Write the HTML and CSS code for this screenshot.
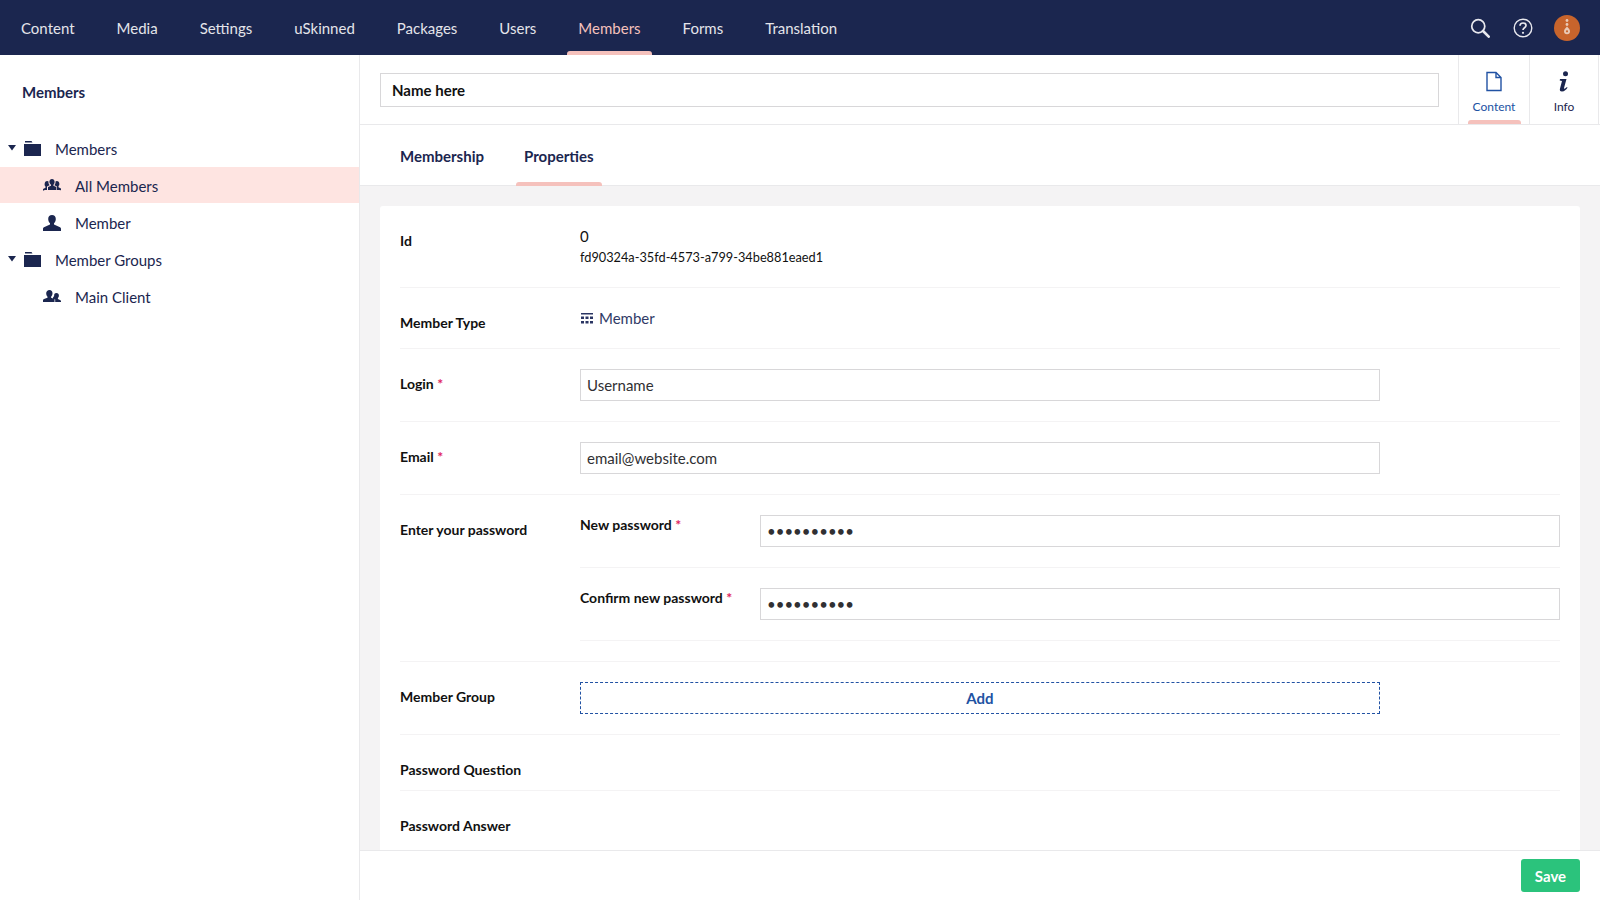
FILE: index.html
```html
<!DOCTYPE html>
<html lang="en">
<head>
  <meta charset="UTF-8">
  <title>Members</title>
  <link rel="stylesheet" href="styles.css">
</head>
<body>
  <header class="topbar">
    <nav class="sections">
      <a class="section">Content</a>
      <a class="section">Media</a>
      <a class="section">Settings</a>
      <a class="section">uSkinned</a>
      <a class="section">Packages</a>
      <a class="section">Users</a>
      <a class="section active">Members</a>
      <a class="section">Forms</a>
      <a class="section">Translation</a>
    </nav>
    <div class="tools">
      <svg class="tool-search" width="20" height="20" viewBox="0 0 23 23">
        <circle cx="9.5" cy="9.5" r="7.5" fill="none" stroke="#e8e8ee" stroke-width="2"/>
        <path d="M15 15l6.500 6.500" stroke="#e8e8ee" stroke-width="3" stroke-linecap="round"/>
      </svg>
      <svg class="tool-help" width="20" height="20" viewBox="0 0 20 20">
        <circle cx="10" cy="10" r="8.800" fill="none" stroke="#e8e8ee" stroke-width="1.400"/>
        <path d="M7 7.800c0-1.800 1.400-2.800 3-2.800s3 1 3 2.600c0 2.200-3 2.200-3 4.400" fill="none" stroke="#e8e8ee" stroke-width="1.700"/>
        <circle cx="10" cy="14.800" r="1.100" fill="#e8e8ee"/>
      </svg>
      <svg class="tool-avatar" width="26" height="26" viewBox="0 0 26 26">
        <circle cx="13" cy="13" r="13" fill="#c8642c"/>
        <circle cx="13" cy="5.500" r="1.400" fill="#e9c9b6"/>
        <circle cx="13" cy="9.500" r="1.400" fill="#e9c9b6"/>
        <path d="M13 11.500c2 2 3 3.400 3 4.800a3 3 0 0 1-6 0c0-1.400 1-2.800 3-4.800z" fill="#e9c9b6"/>
        <circle cx="13" cy="16.300" r="1.100" fill="#c8642c"/>
      </svg>
    </div>
  </header>

  <div class="layout">
    <aside class="sidebar">
      <h3 class="tree-title">Members</h3>
      <ul class="tree">
        <li class="tree-row root">
          <svg class="caret" width="8" height="6" viewBox="0 0 8 6"><path d="M0 0h8L4 5.500z" fill="#1b264f"/></svg>
          <svg class="tree-icon" width="17" height="15" viewBox="0 0 17 15"><path d="M1 0h6.500l1 1.500H1zM0 3h17v12H0z" fill="#1b264f"/></svg>
          <span>Members</span>
        </li>
        <li class="tree-row leaf selected">
          <svg class="tree-icon" width="18" height="13" viewBox="0 0 18 13"><path d="M9 0c1.500 0 2.600 1.100 2.600 2.800 0 1.300-.5 2.300-1.200 2.900v1l3 1.400V11H5V8.100l3-1.400v-1C7.300 5.100 6.400 4.100 6.400 2.800 6.400 1.100 7.500 0 9 0zM4.200 2c.6 0 1 .2 1.300.5-.2 1.400.2 2.700 1 3.600v.2L4 7.500V11H1.800l-1.800.7v-1.600l2.500-1.300v-1.300c-.6-.5-.9-1.200-.9-2.100C1.600 3.100 2.700 2 4.200 2zM13.800 2c1.500 0 2.600 1.100 2.600 2.900 0 .9-.3 1.600-.9 2.100v1.300l2.500 1.300v1.600L16.200 11H14V7.500l-2.500-1.200v-.2c.8-.9 1.200-2.200 1-3.600.3-.3.700-.5 1.300-.5z" fill="#1b264f"/></svg>
          <span>All Members</span>
        </li>
        <li class="tree-row leaf">
          <svg class="tree-icon" width="18" height="16" viewBox="0 0 18 16"><path d="M9 0c2.300 0 3.800 1.600 3.800 4 0 1.900-.8 3.500-1.800 4.300v1.200l5.500 2.500c.9.400 1.500 1 1.500 1.800V16H0v-2.200c0-.8.600-1.400 1.500-1.800L7 9.500V8.300C6 7.500 5.200 5.900 5.200 4 5.200 1.600 6.700 0 9 0z" fill="#1b264f"/></svg>
          <span>Member</span>
        </li>
        <li class="tree-row root">
          <svg class="caret" width="8" height="6" viewBox="0 0 8 6"><path d="M0 0h8L4 5.500z" fill="#1b264f"/></svg>
          <svg class="tree-icon" width="17" height="15" viewBox="0 0 17 15"><path d="M1 0h6.500l1 1.500H1zM0 3h17v12H0z" fill="#1b264f"/></svg>
          <span>Member Groups</span>
        </li>
        <li class="tree-row leaf">
          <svg class="tree-icon" width="18" height="13" viewBox="0 0 18 13"><path d="M6.500 0c1.900 0 3 1.300 3 3.300 0 1.500-.6 2.700-1.400 3.400v1l3.400 1.300V12H0v-1.700c0-.6.400-1.100 1-1.400l3.500-1.200v-1C3.700 6 3.200 4.800 3.200 3.300 3.200 1.300 4.600 0 6.500 0zM13.500 3c1.500 0 2.400 1 2.400 2.600 0 1.100-.4 2-1 2.500v.8l2.100 1c.6.300 1 .7 1 1.200V12h-5.800V9.500L10 8.500v-.9c1-1 1.300-2.100 1.300-3.500.5-.7 1.300-1.100 2.200-1.100z" fill="#1b264f"/></svg>
          <span>Main Client</span>
        </li>
      </ul>
    </aside>

    <main class="editor">
      <div class="editor-head">
        <input class="name-input" type="text" value="Name here">
        <div class="apps">
          <div class="app active">
            <svg width="16" height="20" viewBox="0 0 16 20"><path d="M1 1h9l5 5v13H1z M10 1v5h5" fill="none" stroke="#2152a3" stroke-width="1.400"/></svg>
            <span>Content</span>
          </div>
          <div class="app">
            <svg width="12" height="21" viewBox="0 0 12 21"><circle cx="7.500" cy="2.700" r="2.500" fill="#1b264f"/><path d="M2 8h6.500L6 17c-.2.800.5 1 1 .6l2-1.500.5.700C8 18.800 6.500 20.500 4 20.500c-2 0-2.500-1.200-2-3l2-7.500-2.300-.4z" fill="#1b264f"/></svg>
            <span>Info</span>
          </div>
        </div>
      </div>

      <div class="tabs">
        <a class="tab">Membership</a>
        <a class="tab active">Properties</a>
      </div>

      <div class="scroll">
        <section class="card">
          <div class="prop">
            <div class="prop-label">Id</div>
            <div class="prop-value">
              <div class="id-num">0</div>
              <div class="id-guid">fd90324a-35fd-4573-a799-34be881eaed1</div>
            </div>
          </div>

          <div class="prop">
            <div class="prop-label">Member Type</div>
            <div class="prop-value type-value">
              <svg width="12" height="11" viewBox="0 0 12 11"><path d="M0 0h12v1.500H0zM0 3.500h3v2.500H0zM4.500 3.500h3v2.500h-3zM9 3.500h3v2.500H9zM0 8h3v2.500H0zM4.500 8h3v2.500h-3zM9 8h3v2.500H9z" fill="#2a3563"/></svg>
              <span>Member</span>
            </div>
          </div>

          <div class="prop">
            <div class="prop-label">Login <i class="req">*</i></div>
            <div class="prop-value"><input class="field" type="text" value="Username"></div>
          </div>

          <div class="prop">
            <div class="prop-label">Email <i class="req">*</i></div>
            <div class="prop-value"><input class="field" type="text" value="email@website.com"></div>
          </div>

          <div class="prop">
            <div class="prop-label">Enter your password</div>
            <div class="prop-value">
              <div class="sub-prop">
                <div class="sub-label">New password <i class="req">*</i></div>
                <input class="field pass" type="password" value="1234567890">
              </div>
              <div class="sub-prop">
                <div class="sub-label">Confirm new password <i class="req">*</i></div>
                <input class="field pass" type="password" value="1234567890">
              </div>
            </div>
          </div>

          <div class="prop">
            <div class="prop-label">Member Group</div>
            <div class="prop-value"><button class="add-btn">Add</button></div>
          </div>

          <div class="prop">
            <div class="prop-label">Password Question</div>
          </div>

          <div class="prop">
            <div class="prop-label">Password Answer</div>
          </div>
        </section>
      </div>

      <footer class="editor-foot">
        <button class="save-btn">Save</button>
      </footer>
    </main>
  </div>
</body>
</html>
```

FILE: styles.css
```css
* {
  box-sizing: border-box;
}

body {
  margin: 0;
  height: 100vh;
  overflow: hidden;
  display: flex;
  flex-direction: column;
  font-family: Lato, "Open Sans", sans-serif;
  font-size: 15px;
  color: #1b264f;
  background: #fff;
}

/* top bar */
.topbar {
  height: 55px;
  flex: none;
  display: flex;
  justify-content: space-between;
  background: #1b264f;
}

.sections {
  display: flex;
  padding-left: 10px;
  gap: 20px;
}

.section {
  position: relative;
  padding: 0 11px;
  line-height: 57px;
  font-size: 15px;
  color: #e4e4ea;
}

.section.active {
  color: #f5c1bc;
}

.section.active::after {
  content: "";
  position: absolute;
  left: 0;
  right: 0;
  bottom: 0;
  height: 4px;
  border-radius: 3px 3px 0 0;
  background: #f5c1bc;
}

.tools {
  display: flex;
  align-items: center;
  padding-right: 20px;
}

.tool-search {
  margin-right: 23px;
}

.tool-help {
  margin-right: 21px;
}

/* sidebar */
.layout {
  flex: 1;
  display: flex;
  min-height: 0;
}

.sidebar {
  width: 360px;
  flex: none;
  border-right: 1px solid #e9e9eb;
}

.tree-title {
  margin: 0;
  padding: 26px 0 0 22px;
  line-height: 22px;
  font-size: 15px;
  font-weight: 700;
}

.tree {
  list-style: none;
  margin: 27px 0 0;
  padding: 0;
}

.tree-row {
  height: 36px;
  margin-bottom: 1px;
  padding-top: 2px;
  display: flex;
  align-items: center;
  font-size: 15px;
}

.tree-row.root {
  padding-left: 8px;
}

.tree-row.root .caret {
  margin-right: 8px;
  margin-top: -2px;
}

.tree-row.root .tree-icon {
  margin-right: 14px;
  margin-top: -2px;
}

.tree-row.leaf {
  padding-left: 43px;
}

.tree-row.leaf .tree-icon {
  margin-right: 14px;
  margin-top: -1px;
}

.tree-row.selected {
  background: #fee4e1;
}

/* editor */
.editor {
  flex: 1;
  min-width: 0;
  display: flex;
  flex-direction: column;
}

.editor-head {
  height: 70px;
  flex: none;
  display: flex;
  align-items: flex-start;
  padding-left: 20px;
  border-bottom: 1px solid #e9e9eb;
}

.name-input {
  flex: 1;
  height: 34px;
  margin-top: 18px;
  padding: 0 11px;
  border: 1px solid #d8d7d9;
  font-family: inherit;
  font-size: 15px;
  font-weight: 700;
  color: #111;
}

.apps {
  display: flex;
  margin-left: 19px;
  padding-right: 1px;
}

.app {
  position: relative;
  width: 71px;
  height: 69px;
  padding-top: 16px;
  display: flex;
  flex-direction: column;
  align-items: center;
  border-left: 1px solid #e9e9eb;
  font-size: 12px;
}

.app:last-child {
  width: 70px;
  border-right: 1px solid #e9e9eb;
}

.app svg {
  height: 21px;
}

.app span {
  margin-top: 7px;
}

.app.active {
  color: #2152a3;
}

.app.active::after {
  content: "";
  position: absolute;
  left: 9px;
  right: 8px;
  bottom: 0;
  height: 4px;
  border-radius: 3px 3px 0 0;
  background: #f5c1bc;
}

.tabs {
  height: 61px;
  flex: none;
  display: flex;
  gap: 24px;
  padding-left: 32px;
  border-bottom: 1px solid #e9e9eb;
}

.tab {
  position: relative;
  padding: 0 8px;
  line-height: 62px;
  font-size: 15px;
  font-weight: 700;
}

.tab.active::after {
  content: "";
  position: absolute;
  left: 0;
  right: 0;
  bottom: -1px;
  height: 4px;
  border-radius: 3px 3px 0 0;
  background: #f5c1bc;
}

.scroll {
  flex: 1;
  min-height: 0;
  overflow: hidden;
  padding: 20px 20px 0;
  background: #f4f3f4;
}

.card {
  padding: 20px;
  border-radius: 3px;
  background: #fff;
  box-shadow: 0 1px 1px rgba(0, 0, 0, .03);
}

.prop {
  display: flex;
  margin-bottom: 20px;
  padding-bottom: 20px;
  border-bottom: 1px solid #f4f3f4;
}

.prop:last-child {
  border-bottom: 0;
}

.prop-label {
  width: 180px;
  height: 15px;
  flex: none;
  padding-top: 4px;
  line-height: 22px;
  font-size: 14px;
  font-weight: 700;
  color: #111;
}

.prop-value {
  flex: 1;
  min-width: 0;
}

.req {
  font-style: normal;
  color: #e0245e;
}

.id-num {
  line-height: 21px;
  font-size: 15px;
  color: #111;
}

.id-guid {
  line-height: 20px;
  font-size: 12.75px;
  color: #111;
}

.type-value {
  height: 20px;
  display: flex;
  align-items: center;
  gap: 6px;
  padding-left: 1px;
  font-size: 15px;
  color: #303a66;
}

.field {
  display: block;
  width: 800px;
  height: 32px;
  padding: 0 6px;
  border: 1px solid #d8d7d9;
  font-family: inherit;
  font-size: 15px;
  color: #303033;
}

.sub-prop {
  display: flex;
  padding-bottom: 20px;
  margin-bottom: 20px;
  border-bottom: 1px solid #f4f3f4;
}

.sub-prop:last-child {
  margin-bottom: 0;
}

.sub-label {
  width: 180px;
  flex: none;
  line-height: 20px;
  font-size: 14px;
  font-weight: 700;
  color: #111;
}

.pass {
  flex: 1;
  width: auto;
}

.add-btn {
  display: block;
  width: 800px;
  height: 32px;
  border: 1px dashed #2152a3;
  background: #fff;
  font-family: inherit;
  font-size: 15px;
  font-weight: 700;
  color: #2152a3;
}

.editor-foot {
  height: 50px;
  flex: none;
  display: flex;
  justify-content: flex-end;
  padding: 8px 20px 0 0;
  border-top: 1px solid #e9e9eb;
  background: #fff;
}

.save-btn {
  width: 59px;
  height: 33px;
  border: 0;
  border-radius: 3px;
  background: #2bc37c;
  font-family: inherit;
  font-size: 15px;
  font-weight: 700;
  color: #fff;
}
```
